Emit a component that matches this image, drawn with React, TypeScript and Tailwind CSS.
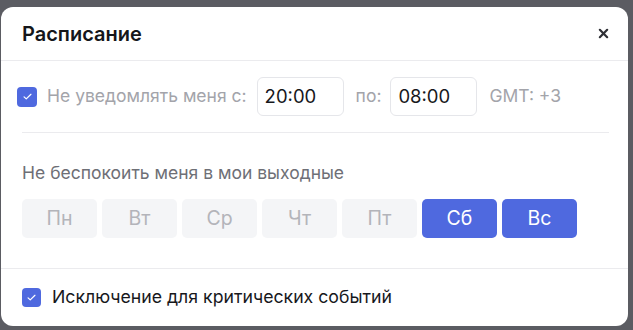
import React from 'react';

const days = [
  { label: 'Пн', on: false },
  { label: 'Вт', on: false },
  { label: 'Ср', on: false },
  { label: 'Чт', on: false },
  { label: 'Пт', on: false },
  { label: 'Сб', on: true },
  { label: 'Вс', on: true },
];

function Check({ size }: { size: string }) {
  return (
    <span className={`${size} flex items-center justify-center rounded-[4px] bg-[#4f69df] shrink-0`}>
      <svg viewBox="0 0 16 16" className="w-[11px] h-[11px]" fill="none">
        <path d="M3 8.5l3.2 3L13 4.8" stroke="white" strokeWidth="1.8" strokeLinecap="round" strokeLinejoin="round" />
      </svg>
    </span>
  );
}

function TimeInput({ value }: { value: string }) {
  return (
    <div className="w-[87px] h-[39px] flex items-center px-[7px] rounded-[6px] border border-[#e5e6ea] text-[18.5px] text-[#17181c]">
      {value}
    </div>
  );
}

export default function App() {
  return (
    <div
      className="w-[633px] h-[330px] bg-[#5b5c62] pt-[7px] pl-[1px] pr-[5px] pb-[4px]"
      style={{ fontFamily: 'Inter, "Noto Sans", sans-serif' }}
    >
      <div className="h-full bg-white rounded-[12px] flex flex-col">
        {/* header */}
        <div className="h-[54px] shrink-0 flex items-center justify-between pl-[21px] pr-[19px] border-b border-[#ebebee]">
          <span className="text-[20px] font-semibold text-[#15161a]">Расписание</span>
          <svg viewBox="0 0 12 12" className="w-[11px] h-[11px]" fill="none">
            <path d="M2 2l8 8M10 2l-8 8" stroke="#2f3035" strokeWidth="2.4" strokeLinecap="round" />
          </svg>
        </div>

        {/* quiet hours */}
        <div className="flex items-center mt-[16px] pl-[16px]">
          <Check size="w-[20px] h-[20px]" />
          <span className="ml-[10px] text-[17.5px] text-[#a3a4aa]">Не уведомлять меня с:</span>
          <div className="ml-[10px]">
            <TimeInput value="20:00" />
          </div>
          <span className="ml-[12px] text-[17.5px] text-[#a3a4aa]">по:</span>
          <div className="ml-[9px]">
            <TimeInput value="08:00" />
          </div>
          <span className="ml-[12px] text-[17.5px] text-[#a3a4aa]">GMT: +3</span>
        </div>
        <div className="mt-[16px] ml-[21px] mr-[19px] border-t border-[#ebebee]" />

        {/* weekends */}
        <div className="mt-[29px] pl-[21px] text-[17.5px] leading-[22px] text-[#6e6f76]">
          Не беспокоить меня в мои выходные
        </div>
        <div className="mt-[15px] pl-[21px] flex gap-[5px]">
          {days.map((d) =>
            d.on ? (
              <div
                key={d.label}
                className="w-[75px] h-[39px] rounded-[5px] bg-[#4f69df] text-white text-[19.5px] flex items-center justify-center"
              >
                {d.label}
              </div>
            ) : (
              <div
                key={d.label}
                className="w-[75px] h-[39px] rounded-[5px] bg-[#f4f5f7] text-[#b3b4ba] text-[19.5px] flex items-center justify-center"
              >
                {d.label}
              </div>
            ),
          )}
        </div>

        {/* critical */}
        <div className="mt-[30px] border-t border-[#ebebee] flex-1 flex items-center pl-[21px]">
          <Check size="w-[19px] h-[19px]" />
          <span className="ml-[11px] text-[17.7px] text-[#17181c]">Исключение для критических событий</span>
        </div>
      </div>
    </div>
  );
}
